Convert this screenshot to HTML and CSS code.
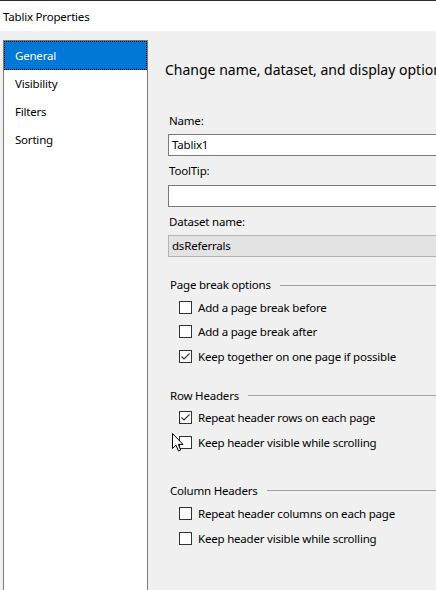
FILE: index.html
```html
<!DOCTYPE html>
<html>
<head>
<meta charset="utf-8">
<link rel="stylesheet" href="styles.css">
</head>
<body>
<div class="window">
  <div class="titlebar">Tablix Properties</div>
  <div class="main">
    <div class="sidebar">
      <div class="item selected">General</div>
      <div class="item">Visibility</div>
      <div class="item">Filters</div>
      <div class="item">Sorting</div>
    </div>
    <div class="content">
      <div class="heading">Change name, dataset, and display options.</div>
      <div class="fields">
        <div class="label label-name">Name:</div>
        <div class="textbox textbox-first">Tablix1</div>
        <div class="label label-tip">ToolTip:</div>
        <div class="textbox"></div>
        <div class="label label-ds">Dataset name:</div>
        <div class="textbox disabled">dsReferrals</div>

        <div class="group group-first">
          <div class="group-title"><span>Page break options</span><span class="rule"></span></div>
          <div class="check-row"><span class="box"></span><span>Add a page break before</span></div>
          <div class="check-row"><span class="box"></span><span>Add a page break after</span></div>
          <div class="check-row"><span class="box checked"><svg viewBox="0 0 13 13" width="13" height="13"><path d="M2.5 6.5 L5 9 L10.5 3.5" fill="none" stroke="#333" stroke-width="1.1"/></svg></span><span>Keep together on one page if possible</span></div>
        </div>

        <div class="group group-row">
          <div class="group-title"><span>Row Headers</span><span class="rule"></span></div>
          <div class="check-row"><span class="box checked"><svg viewBox="0 0 13 13" width="13" height="13"><path d="M2.5 6.5 L5 9 L10.5 3.5" fill="none" stroke="#333" stroke-width="1.1"/></svg></span><span>Repeat header rows on each page</span></div>
          <div class="check-row cursor-row"><span class="box"></span><span>Keep header visible while scrolling</span>
            <svg class="cursor" viewBox="0 0 12 19" width="12" height="19"><path d="M0.5 0.5 L0.5 15.5 L4 12.2 L6.5 18 L8.7 17 L6.3 11.4 L11 11.4 Z" fill="#fff" stroke="#000" stroke-width="1" stroke-linejoin="miter"/></svg>
          </div>
        </div>

        <div class="group group-col">
          <div class="group-title"><span>Column Headers</span><span class="rule"></span></div>
          <div class="check-row"><span class="box"></span><span>Repeat header columns on each page</span></div>
          <div class="check-row"><span class="box"></span><span>Keep header visible while scrolling</span></div>
        </div>
      </div>
    </div>
  </div>
</div>
</body>
</html>
```
FILE: styles.css
```css
html, body {
  margin: 0;
  padding: 0;
  width: 436px;
  height: 590px;
  overflow: hidden;
  background: #f0f0f0;
}
body {
  font-family: "Noto Sans", "Open Sans", "DejaVu Sans", sans-serif;
  font-size: 11.5px;
  letter-spacing: -0.2px;
  color: #000;
}
.window {
  width: 436px;
  height: 590px;
  display: flex;
  flex-direction: column;
  overflow: hidden;
}
.titlebar {
  border-top: 1px solid #2b2b2b;
  background: #fff;
  height: 30px;
  line-height: 31px;
  padding-left: 3px;
  flex: none;
}
.main {
  display: flex;
  flex: 1;
  min-height: 0;
  overflow: hidden;
}
.sidebar {
  margin: 9px 0 0 3px;
  width: 143px;
  height: 600px;
  background: #fff;
  border: 1px solid #7a7a7a;
  border-bottom: none;
  flex: none;
}
.item {
  height: 28px;
  line-height: 28px;
  padding-left: 11px;
  box-sizing: border-box;
}
.item.selected {
  background: #0078d7;
  color: #fff;
  height: 29px;
  line-height: 29px;
  outline: 1px dotted #000;
  outline-offset: -1px;
}
.content {
  flex: 1;
  min-width: 0;
  padding-left: 17px;
  overflow: hidden;
}
.heading {
  margin-top: 29px;
  font-size: 14px;
  letter-spacing: 0;
  line-height: 20px;
  white-space: nowrap;
  color: #000;
}
.fields {
  margin-left: 3px;
}
.label {
  height: 16px;
  line-height: 16px;
  margin-top: 6px;
  padding-left: 1px;
  white-space: nowrap;
}
.label-name {
  margin-top: 33px;
}
.label-tip {
  margin-top: 7px;
}
.label-ds {
  margin-top: 7px;
}
.textbox {
  margin-top: 6px;
  width: 320px;
  height: 22px;
  box-sizing: border-box;
  border: 1px solid #7a7a7a;
  background: #fff;
  line-height: 20px;
  padding-left: 3px;
  white-space: nowrap;
}
.textbox-first {
  margin-top: 5px;
}
.textbox.disabled {
  margin-top: 5px;
  background: #e3e3e3;
  border-color: #b4b4b4;
}
.group-first {
  margin-top: 20px;
}
.group-row {
  margin-top: 19px;
}
.group-col {
  margin-top: 28px;
}
.group-title {
  display: flex;
  align-items: center;
  height: 16px;
  line-height: 16px;
  padding-left: 2px;
  white-space: nowrap;
}
.rule {
  flex: 1;
  height: 1px;
  background: #a0a0a0;
  margin-left: 9px;
  margin-right: -20px;
}
.check-row {
  position: relative;
  display: flex;
  align-items: center;
  height: 24.5px;
  padding-left: 11px;
  white-space: nowrap;
}
.group-title + .check-row {
  margin-top: 2px;
}
.group-col .group-title + .check-row {
  margin-top: 3px;
}
.box {
  width: 13px;
  height: 13px;
  box-sizing: border-box;
  border: 1px solid #333;
  background: #fff;
  margin-right: 6px;
  flex: none;
  position: relative;
}
.box svg {
  position: absolute;
  left: -1px;
  top: -1px;
}
.cursor {
  position: absolute;
  left: 4px;
  top: 3px;
}
```
